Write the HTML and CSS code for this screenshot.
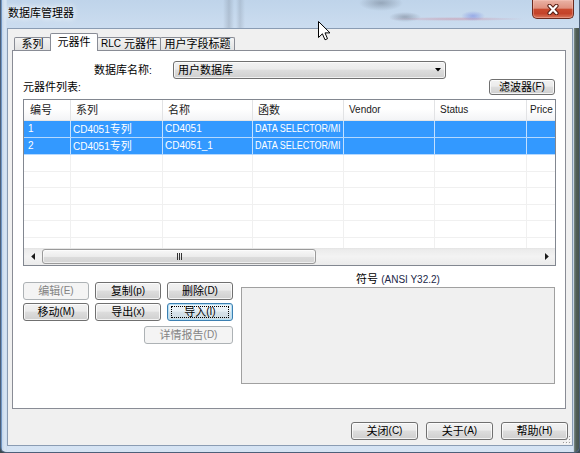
FILE: index.html
```html
<!DOCTYPE html>
<html lang="zh-CN">
<head>
<meta charset="utf-8">
<title>数据库管理器</title>
<link rel="stylesheet" href="styles.css">
</head>
<body>
<div class="window">
  <div class="titlebar">
    <span class="title">数据库管理器</span>
    <div class="close">
      <svg width="14" height="11" viewBox="0 0 14 11">
        <path d="M3.5 1.8 L10.5 9.2 M10.5 1.8 L3.5 9.2" stroke="#5a2016" stroke-width="4.2" stroke-linecap="round" fill="none"/>
        <path d="M3.5 1.8 L10.5 9.2 M10.5 1.8 L3.5 9.2" stroke="#ffffff" stroke-width="2.2" stroke-linecap="round" fill="none"/>
      </svg>
    </div>
  </div>
  <div class="client">
    <div class="tabs">
      <div class="tab t1">系列</div>
      <div class="tab t2 sel">元器件</div>
      <div class="tab t3"><span class="l">RLC</span>&nbsp;元器件</div>
      <div class="tab t4">用户字段标题</div>
    </div>
    <div class="panel">
      <div class="dbrow">
        <span class="dblabel">数据库名称<span class="l">:</span></span>
        <div class="combo">
          <span>用户数据库</span>
          <svg width="6" height="4" viewBox="0 0 6 4"><polygon points="0,0 6,0 3,3.6" fill="#000"/></svg>
        </div>
      </div>
      <div class="listhead">
        <span class="cap">元器件列表<span class="l">:</span></span>
        <div class="btn filter">滤波器<span class="l">(F)</span></div>
      </div>
      <div class="list">
        <div class="grid">
          <div class="row hdr">
            <div class="c">编号</div>
            <div class="c">系列</div>
            <div class="c">名称</div>
            <div class="c">函数</div>
            <div class="c l">Vendor</div>
            <div class="c l">Status</div>
            <div class="c l">Price</div>
          </div>
          <div class="row sr">
            <div class="c l">1</div>
            <div class="c"><span class="l">CD4051</span>专列</div>
            <div class="c l">CD4051</div>
            <div class="c l"><span class="n">DATA SELECTOR/MI</span></div>
            <div class="c"></div>
            <div class="c"></div>
            <div class="c"></div>
          </div>
          <div class="row sr">
            <div class="c l">2</div>
            <div class="c"><span class="l">CD4051</span>专列</div>
            <div class="c l">CD4051_1</div>
            <div class="c l"><span class="n">DATA SELECTOR/MI</span></div>
            <div class="c"></div>
            <div class="c"></div>
            <div class="c"></div>
          </div>
          <div class="row er"><div class="c"></div><div class="c"></div><div class="c"></div><div class="c"></div><div class="c"></div><div class="c"></div><div class="c"></div></div>
          <div class="row er"><div class="c"></div><div class="c"></div><div class="c"></div><div class="c"></div><div class="c"></div><div class="c"></div><div class="c"></div></div>
          <div class="row er"><div class="c"></div><div class="c"></div><div class="c"></div><div class="c"></div><div class="c"></div><div class="c"></div><div class="c"></div></div>
          <div class="row er"><div class="c"></div><div class="c"></div><div class="c"></div><div class="c"></div><div class="c"></div><div class="c"></div><div class="c"></div></div>
          <div class="row er"><div class="c"></div><div class="c"></div><div class="c"></div><div class="c"></div><div class="c"></div><div class="c"></div><div class="c"></div></div>
          <div class="row er"><div class="c"></div><div class="c"></div><div class="c"></div><div class="c"></div><div class="c"></div><div class="c"></div><div class="c"></div></div>
        </div>
        <div class="hscroll">
          <div class="sarrow">
            <svg width="4" height="7" viewBox="0 0 4 7"><polygon points="4,0 4,7 0.2,3.5" fill="#1a1a1a"/></svg>
          </div>
          <div class="thumb">
            <svg width="7" height="7" viewBox="0 0 7 7"><path d="M1.5 0 V7 M3.5 0 V7 M5.5 0 V7" stroke="#333" stroke-width="1"/></svg>
          </div>
          <div class="track"></div>
          <div class="sarrow">
            <svg width="4" height="7" viewBox="0 0 4 7"><polygon points="0,0 0,7 3.8,3.5" fill="#1a1a1a"/></svg>
          </div>
        </div>
      </div>
      <div class="lower">
        <div class="btns">
          <div class="btn dis">编辑<span class="l">(E)</span></div>
          <div class="btn">复制<span class="l">(p)</span></div>
          <div class="btn">删除<span class="l">(D)</span></div>
          <div class="btn">移动<span class="l">(M)</span></div>
          <div class="btn">导出<span class="l">(x)</span></div>
          <div class="btn focus">导入<span class="l">(I)</span></div>
          <div class="btn dis detail">详情报告<span class="l">(D)</span></div>
        </div>
        <div class="symbol">
          <div class="symlabel">符号 <span class="l ansi">(ANSI Y32.2)</span></div>
          <div class="symbox"></div>
        </div>
      </div>
    </div>
    <div class="footer">
      <div class="btn fbtn">关闭<span class="l">(C)</span></div>
      <div class="btn fbtn">关于<span class="l">(A)</span></div>
      <div class="btn fbtn">帮助<span class="l">(H)</span></div>
    </div>
    <svg class="grip" width="8" height="8" viewBox="0 0 8 8">
      <g fill="#ffffff"><rect x="7" y="1" width="1" height="1"/><rect x="7" y="4" width="1" height="1"/><rect x="4" y="4" width="1" height="1"/><rect x="7" y="7" width="1" height="1"/><rect x="4" y="7" width="1" height="1"/><rect x="1" y="7" width="1" height="1"/></g>
      <g fill="#9a9a9a"><rect x="6" y="0" width="1" height="1"/><rect x="6" y="3" width="1" height="1"/><rect x="3" y="3" width="1" height="1"/><rect x="6" y="6" width="1" height="1"/><rect x="3" y="6" width="1" height="1"/><rect x="0" y="6" width="1" height="1"/></g>
    </svg>
  </div>
  <svg class="cursor" width="13" height="20" viewBox="0 0 13 20">
    <path d="M0.5 0.5 V16.5 L4.4 12.8 L7 18.8 L9.5 17.7 L7 11.9 L12 11.9 Z" fill="#fff" stroke="#000" stroke-width="1" stroke-linejoin="miter"/>
  </svg>
</div>
</body>
</html>
```

FILE: styles.css
```css
* { box-sizing: border-box; }
html, body { margin: 0; padding: 0; }
body {
  width: 580px;
  height: 453px;
  overflow: hidden;
  background: #3c4a50;
  font-family: "Liberation Sans", "Noto Sans CJK SC", sans-serif;
  font-size: 11px;
  line-height: 14px;
  color: #000;
}
.l { font-size: 10px; }

.window {
  position: relative;
  width: 580px;
  height: 453px;
  border: 1px solid #4d6079;
  border-top: none;
  border-radius: 0 0 6px 6px;
  overflow: hidden;
  background:
    linear-gradient(to right, #7096c4 0, #7096c4 1px, #c3d5ea 1px, #d9e6f4 4px, #cbdcef 6px) 0 0 / 6px 100% no-repeat,
    linear-gradient(to right, #c7d6e7 0, #c7d6e7 1px, #7d8c85 1px, #52605a 3px, #48554f 6px) right 0 top 28px / 6px 100% no-repeat,
    linear-gradient(180deg, #bfd4ea 0%, #cfdff1 8%, #cadbee 60%, #d5e3f3 100%);
}

.titlebar {
  height: 28px;
  display: flex;
  align-items: flex-start;
  background:
    radial-gradient(ellipse 16px 5px at 404px 17px, rgba(70, 75, 90, 0.35), transparent),
    radial-gradient(ellipse 12px 5px at 472px 16px, rgba(80, 100, 220, 0.4), transparent),
    radial-gradient(ellipse 70px 2px at 455px 19px, rgba(205, 90, 110, 0.35), transparent),
    radial-gradient(ellipse 22px 8px at 380px 3px, rgba(70, 80, 95, 0.35), transparent),
    linear-gradient(to right, transparent 222px, rgba(120, 132, 148, 0.3) 228px, transparent 233px, transparent 235px, rgba(120, 132, 148, 0.25) 239px, transparent 244px);
}
.title {
  padding: 6px 0 0 7px;
  line-height: 14px;
  font-size: 11px;
  color: #000;
  text-shadow: 0 0 5px #fff, 0 0 9px #fff;
}
.close {
  margin-left: auto;
  margin-right: 5px;
  width: 42px;
  height: 19px;
  border: 1px solid #6b2a1f;
  border-top: none;
  border-radius: 0 0 5px 5px;
  background: linear-gradient(#eab3a5 0%, #df917f 45%, #c94a2f 52%, #c4432a 75%, #d9775c 100%);
  box-shadow: inset 0 0 0 1px rgba(255, 210, 200, 0.35);
  display: flex;
  align-items: center;
  justify-content: center;
}

.client {
  position: relative;
  margin: 0 6px;
  height: 418px;
  border: 1px solid #8a9cb3;
  background: #f0f0f0;
  padding: 4px 0 0 4px;
  display: flex;
  flex-direction: column;
}

.tabs {
  display: flex;
  align-items: flex-end;
  height: 17px;
  margin-left: 2px;
  position: relative;
  z-index: 2;
}
.tab {
  height: 13px;
  border: 1px solid #898c95;
  border-bottom: none;
  border-radius: 2px 2px 0 0;
  margin-left: -1px;
  background: linear-gradient(#f4f4f4, #e2e2e2);
  display: flex;
  align-items: center;
  justify-content: center;
  line-height: 12px;
  white-space: nowrap;
}
.tab:first-child { margin-left: 0; }
.t1 { width: 37px; }
.t2 { width: 48px; }
.t3 { width: 64px; }
.t4 { width: 75px; }
.tab.sel {
  height: 18px;
  margin-bottom: -1px;
  background: #fff;
  position: relative;
  z-index: 3;
  padding-bottom: 1px;
}

.panel {
  width: 554px;
  height: 359px;
  border: 1px solid #898c95;
  background: #fff;
  position: relative;
  z-index: 1;
}

.dbrow {
  display: flex;
  align-items: center;
  height: 18px;
  margin-top: 10px;
}
.dblabel {
  width: 160px;
  padding-left: 81px;
  white-space: nowrap;
}
.combo {
  width: 273px;
  height: 18px;
  border: 1px solid #707070;
  border-radius: 3px;
  background: linear-gradient(#f2f2f2 0%, #ebebeb 45%, #dddddd 50%, #cfcfcf 100%);
  box-shadow: inset 0 0 0 1px rgba(255, 255, 255, 0.7);
  display: flex;
  align-items: center;
  justify-content: space-between;
  padding: 0 4px 0 4px;
  line-height: 14px;
}

.listhead {
  display: flex;
  justify-content: space-between;
  align-items: flex-end;
  height: 16px;
  margin: 0 10px;
}
.cap { line-height: 14px; white-space: nowrap; }

.btn {
  display: flex;
  align-items: center;
  justify-content: center;
  height: 18px;
  border: 1px solid #707070;
  border-radius: 3px;
  background: linear-gradient(#f2f2f2 0%, #ebebeb 45%, #dddddd 50%, #cfcfcf 100%);
  box-shadow: inset 0 0 0 1px rgba(255, 255, 255, 0.75);
  line-height: 14px;
  white-space: nowrap;
}
.btn.dis {
  border-color: #adb2b5;
  background: #f4f4f4;
  box-shadow: none;
  color: #838383;
}
.btn.focus {
  position: relative;
  border-color: #3c7fb1;
  box-shadow: inset 0 0 0 1px #b6e0f5;
  background: linear-gradient(#f0f6fa 0%, #e6eff5 45%, #d6e2ea 50%, #cbd9e2 100%);
}
.btn.focus::after {
  content: "";
  position: absolute;
  left: 3px; right: 3px; top: 2px; bottom: 2px;
  border: 1px dotted #000;
}
.filter { width: 66px; height: 16px; }

.list {
  margin: 4px 9px 0 10px;
  height: 167px;
  border: 1px solid #828790;
  display: flex;
  flex-direction: column;
}
.grid {
  flex: 1;
  overflow: hidden;
}
.row {
  display: grid;
  grid-template-columns: 47px 92px 90px 91px 91px 92px 28px;
}
.c {
  border-right: 1px solid #f0f0f0;
  white-space: nowrap;
  overflow: hidden;
  padding-left: 2px;
}
.c:last-child { border-right: none; }
.hdr {
  height: 21px;
  line-height: 20px;
  background: linear-gradient(#ffffff 0%, #ffffff 45%, #f3f4f6 100%);
  border-bottom: 1px solid #e5e5e5;
  color: #1a1a1a;
}
.hdr .c { border-right-color: #e2e3e5; padding-left: 5px; }
.hdr .c:first-child { padding-left: 6px; }
.hdr .c:last-child { padding-left: 3px; }
.sr {
  height: 17px;
  line-height: 16px;
  background: #3399ff;
  color: #fff;
  border-bottom: 1px solid #b5d9ff;
}
.sr .c { border-right-color: #c3e0ff; }
.sr .c:first-child { padding-left: 4px; }
.sr .c:last-child { border-right: none; }
.n {
  display: inline-block;
  transform: scaleX(0.9);
  transform-origin: 0 50%;
}
.er {
  height: 16.6px;
  border-bottom: 1px solid #f0f0f0;
}

.hscroll {
  height: 17px;
  flex: none;
  display: flex;
  align-items: center;
  background: linear-gradient(#e3e3e3 0, #ececec 2px, #f3f3f3 50%, #ebebeb 100%);
}
.sarrow {
  width: 17px;
  height: 17px;
  display: flex;
  align-items: center;
  justify-content: center;
}
.thumb {
  width: 274px;
  height: 15px;
  margin-left: 1px;
  border: 1px solid #9a9a9a;
  border-radius: 3px;
  background: linear-gradient(#f8f8f8 0%, #ececec 50%, #dcdcdc 51%, #d4d4d4 100%);
  box-shadow: inset 0 0 0 1px rgba(255, 255, 255, 0.6);
  display: flex;
  align-items: center;
  justify-content: center;
}
.track { flex: 1; }

.lower {
  display: grid;
  grid-template-columns: 210px 314px;
  column-gap: 8px;
  margin-left: 10px;
}
.btns {
  display: grid;
  grid-template-columns: repeat(3, 66px);
  grid-auto-rows: 18px;
  column-gap: 6px;
  row-gap: 3px;
  padding-top: 16px;
}
.btns .detail {
  grid-column: 2 / 4;
  justify-self: end;
  align-self: start;
  width: 89px;
  margin-top: 2px;
}
.symbol { padding-top: 6px; }
.symlabel {
  text-align: center;
  line-height: 14px;
  white-space: nowrap;
}
.ansi { color: #1b2748; }
.symbox {
  height: 97px;
  border: 1px solid #a0a0a0;
  background: #f0f0f0;
}

.footer {
  display: flex;
  justify-content: flex-end;
  gap: 8px;
  margin-top: 13px;
  padding-right: 4px;
}
.fbtn { width: 67px; }

.grip {
  position: absolute;
  right: 1px;
  bottom: 1px;
}
.cursor {
  position: absolute;
  left: 317px;
  top: 21px;
}
```
